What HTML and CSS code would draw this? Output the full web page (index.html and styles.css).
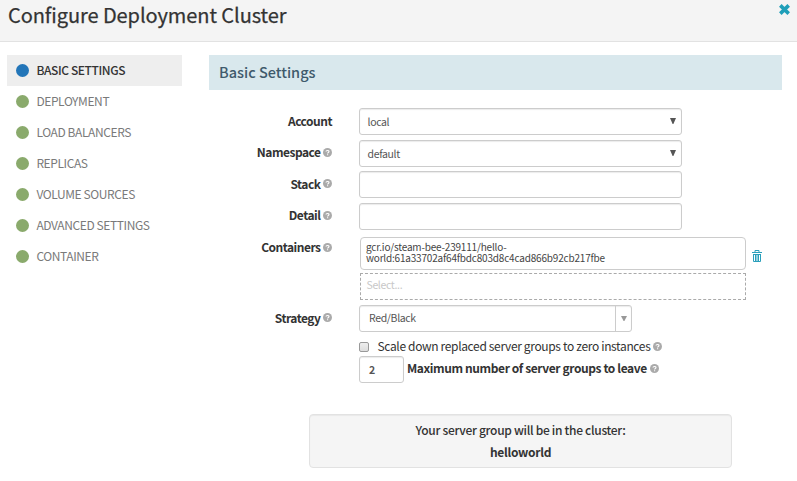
FILE: index.html
```html
<!DOCTYPE html>
<html lang="en">
<head>
<meta charset="utf-8">
<title>Configure Deployment Cluster</title>
<link rel="stylesheet" href="styles.css">
</head>
<body>
<svg class="defs" width="0" height="0" aria-hidden="true">
  <symbol id="help" viewBox="0 0 9 9"><circle cx="4.5" cy="4.5" r="4.5" fill="#aaa"/><path d="M3 3.6C3 2.1 6 2 6 3.6C6 4.5 4.6 4.4 4.6 5.4M4.6 6.3V7.2" fill="none" stroke="#fff" stroke-width="1.1"/></symbol>
</svg>
<header class="modal-header">
  <h1 class="title"><span>Configure Deployment Cluster</span></h1>
  <svg class="close" width="11" height="11" viewBox="0 0 11 11"><path d="M1.3 1.4L9.7 9.6M9.7 1.4L1.3 9.6" stroke="#1f9fb9" stroke-width="3.6"/></svg>
</header>
<div class="modal-body">
  <nav class="steps">
    <a class="step active"><i class="dot"></i><span>BASIC SETTINGS</span></a>
    <a class="step"><i class="dot"></i><span>DEPLOYMENT</span></a>
    <a class="step"><i class="dot"></i><span>LOAD BALANCERS</span></a>
    <a class="step"><i class="dot"></i><span>REPLICAS</span></a>
    <a class="step"><i class="dot"></i><span>VOLUME SOURCES</span></a>
    <a class="step"><i class="dot"></i><span>ADVANCED SETTINGS</span></a>
    <a class="step"><i class="dot"></i><span>CONTAINER</span></a>
  </nav>
  <main class="panel">
    <h2 class="section"><span>Basic Settings</span></h2>
    <div class="row account"><label class="label">Account</label>
      <div class="field select"><span>local</span><svg class="arrow" width="6" height="6" viewBox="0 0 6 6"><path d="M0 0H6L3.4 6H2.6Z" fill="#555"/></svg></div></div>
    <div class="row namespace"><label class="label">Namespace<svg class="help"><use href="#help"/></svg></label>
      <div class="field select"><span>default</span><svg class="arrow" width="6" height="6" viewBox="0 0 6 6"><path d="M0 0H6L3.4 6H2.6Z" fill="#555"/></svg></div></div>
    <div class="row stack"><label class="label">Stack<svg class="help"><use href="#help"/></svg></label><div class="field"></div></div>
    <div class="row detail"><label class="label">Detail<svg class="help"><use href="#help"/></svg></label><div class="field"></div></div>
    <div class="row containers"><label class="label">Containers<svg class="help"><use href="#help"/></svg></label>
      <div class="container-list">
        <div class="image"><div>gcr.io/steam-bee-239111/hello-</div><div>world:61a33702af64fbdc803d8c4cad866b92cb217fbe</div></div>
        <div class="picker"><span>Select...</span></div>
      </div>
      <svg class="trash" width="10" height="12" viewBox="0 0 10 12"><path d="M0 2.5H10M3 2V.5H7V2M1.5 4V11.5H8.5V4M1 4.5H9M3.5 5V11M5 5V11M6.5 5V11" fill="none" stroke="#2a9fbb" stroke-width="1"/></svg></div>
    <div class="row strategy"><label class="label">Strategy<svg class="help"><use href="#help"/></svg></label>
      <div class="field combo"><span>Red/Black</span><div class="toggle"><svg width="6" height="5" viewBox="0 0 6 5"><path d="M0 0H6L3.4 5H2.6Z" fill="#999"/></svg></div></div></div>
    <div class="option scale"><i class="checkbox"></i><span class="scale-text">Scale down replaced server groups to zero instances</span><svg class="help"><use href="#help"/></svg></div>
    <div class="option"><div class="field number"><span>2</span></div><span class="max-text">Maximum number of server groups to leave</span><svg class="help"><use href="#help"/></svg></div>
    <div class="summary"><p><span>Your server group will be in the cluster:</span></p><p><span class="name">helloworld</span></p></div>
  </main>
</div>
</body>
</html>
```
FILE: styles.css
```css
* { box-sizing: border-box; }
body {
  margin: 0;
  background: #fff;
  color: #333;
  font: 12px/16px "Noto Sans CJK SC", sans-serif;
  white-space: nowrap;
  overflow: hidden;
}
.defs { display: block; height: 0; }
h1, h2, p { margin: 0; }
svg { flex: none; }
.modal-header {
  display: flex;
  justify-content: space-between;
  height: 42px;
  padding: 4px 7px 0 8px;
  background: #f4f4f4;
  border-bottom: 1px solid #e2e2e2;
}
.title {
  font-size: 20px;
  line-height: 22px;
  font-weight: 400;
  letter-spacing: -.07px;
  -webkit-text-stroke: .25px #333;
}
.modal-body { display: flex; padding: 13px 15px 0 7px; gap: 27px; }
.steps { width: 175px; flex: none; }
.step {
  display: flex;
  align-items: center;
  gap: 7px;
  height: 31px;
  padding-left: 9px;
  font-size: 12px;
  letter-spacing: -.4px;
  color: #7a7a7a;
}
.step span { padding: 0 0 2px .4px; }
.step.active { background: #eee; color: #333; font-weight: 500; }
.dot { width: 13px; height: 13px; border-radius: 50%; background: #8aaa6c; }
.active .dot { background: #2275b8; }
.panel { flex: 1; min-width: 0; }
.section {
  height: 35px;
  margin-bottom: 18px;
  padding-left: 10px;
  background: #d9e8ed;
  color: #3f5a6c;
  font-size: 14.5px;
  line-height: 33px;
  font-weight: 500;
}
.row { display: flex; height: 27px; margin-bottom: 4px; }
.account, .stack { margin-bottom: 5px; }
.label {
  display: flex;
  justify-content: flex-end;
  align-items: center;
  width: 123px;
  height: 25px;
  margin-right: 27px;
  font-weight: 700;
  letter-spacing: -.5px;
  flex: none;
}
.help { width: 9px; height: 9px; margin-left: 3px; }
.label .help { margin-left: 2.5px; }
.namespace .label, .detail .label { height: 24px; }
.field {
  display: flex;
  align-items: center;
  width: 323px;
  height: 27px;
  padding-left: 7.5px;
  border: 1px solid #ccc;
  border-radius: 3px;
  box-shadow: inset 0 1px 1px rgba(0, 0, 0, .08);
  color: #555;
  font-size: 10.5px;
  letter-spacing: -.35px;
}
.select { justify-content: space-between; padding-right: 5px; }
.arrow { margin-bottom: 2px; }
.detail { margin-bottom: 7px; }
.containers { height: 63px; margin-bottom: 5px; }
.containers .label { margin-right: 28px; height: 20px; }
.container-list { width: 386px; }
.image {
  height: 33px;
  margin-bottom: 3px;
  padding: 3px 5px;
  border: 1px solid #ccc;
  border-radius: 4px;
  color: #444;
  font-size: 10px;
  letter-spacing: -.19px;
  line-height: 11px;
}
.picker {
  height: 27px;
  padding-left: 5.5px;
  border: 1px dashed #aaa;
  color: #c8c8c8;
  font-size: 10.5px;
  letter-spacing: -.35px;
  line-height: 22px;
}
.trash { margin: 13px 0 0 6px; }
.strategy { margin-bottom: 7px; }
.combo { width: 273px; padding-left: 9px; justify-content: space-between; }
.combo span { padding-bottom: 1px; }
.toggle {
  display: flex;
  align-items: center;
  justify-content: center;
  width: 16px;
  height: 25px;
  border-left: 1px solid #ccc;
}
.option { display: flex; align-items: center; height: 27px; padding-left: 150px; }
.option.scale { height: 16px; margin-bottom: 1px; }
.checkbox {
  width: 10px;
  height: 10px;
  margin-right: 8.5px;
  border: 1px solid #999;
  border-radius: 2px;
  background: linear-gradient(#eee, #ddd);
}
.scale-text { letter-spacing: -.35px; padding-bottom: 2px; }
.scale .help { margin: 0 0 1px 2.5px; }
.number { width: 45px; margin-right: 3px; padding-left: 9px; font-weight: 700; }
.max-text { font-weight: 700; letter-spacing: -.4px; }
.max-text, .max-text + .help { margin-bottom: 3px; }
.summary {
  width: 423px;
  height: 54px;
  margin: 31px 0 0 100px;
  padding-top: 4px;
  background: #f5f5f5;
  border: 1px solid #e2e2e2;
  border-radius: 4px;
  box-shadow: inset 0 1px 1px rgba(0, 0, 0, .05);
  text-align: center;
  font-weight: 500;
  letter-spacing: -.3px;
  line-height: 22px;
}
.name { font-weight: 700; }
```
